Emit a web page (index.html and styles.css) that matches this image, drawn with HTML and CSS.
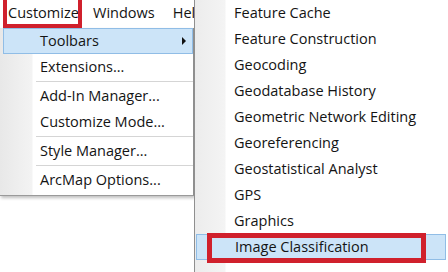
FILE: index.html
```html
<!DOCTYPE html>
<html>
<head>
<meta charset="utf-8">
<link rel="stylesheet" href="styles.css">
</head>
<body>
<div class="screen">
  <div class="left">
    <div class="menubar">
      <span class="mb-item mb-first annotated">Customize</span>
      <span class="mb-item mb-win">Windows</span>
      <span class="mb-item">Help</span>
    </div>
    <div class="dropdown">
      <div class="item hl">Toolbars<span class="arrow"></span></div>
      <div class="item">Extensions...</div>
      <div class="sep"></div>
      <div class="item">Add-In Manager...</div>
      <div class="item">Customize Mode...</div>
      <div class="sep"></div>
      <div class="item">Style Manager...</div>
      <div class="sep"></div>
      <div class="item">ArcMap Options...</div>
    </div>
  </div>
  <div class="sub">
    <div class="sitem">Feature Cache</div>
    <div class="sitem">Feature Construction</div>
    <div class="sitem">Geocoding</div>
    <div class="sitem">Geodatabase History</div>
    <div class="sitem">Geometric Network Editing</div>
    <div class="sitem">Georeferencing</div>
    <div class="sitem">Geostatistical Analyst</div>
    <div class="sitem">GPS</div>
    <div class="sitem">Graphics</div>
    <div class="sitem shl"><span class="sbox"></span>Image Classification</div>
  </div>
</div>
</body>
</html>
```

FILE: styles.css
```css
html, body {
  margin: 0;
  padding: 0;
  background: #ffffff;
}
.screen {
  width: 448px;
  height: 272px;
  overflow: hidden;
  display: flex;
  font-family: "Open Sans", "Noto Sans", sans-serif;
  font-size: 14.5px;
  color: #141414;
}
.left {
  width: 194px;
  flex: none;
  display: flex;
  flex-direction: column;
  overflow: hidden;
}
.menubar {
  height: 28px;
  display: flex;
  white-space: nowrap;
  line-height: 26px;
}
.mb-item {
  padding: 0 0 0 8px;
}
.mb-first {
  margin-left: 3px;
  padding: 0 5px;
  width: 69px;
}
.mb-win {
  padding: 0 10px 0 11px;
}
.annotated {
  position: relative;
}
.annotated::after {
  content: "";
  position: absolute;
  left: 0;
  top: -6px;
  width: 79px;
  height: 34px;
  box-sizing: border-box;
  border: 4px solid #d0202c;
}
.dropdown {
  background: linear-gradient(to right, #e8e8e8 0, #f3f3f3 32px, #ffffff 33px);
  border-right: 1px solid #8f8f8f;
  border-bottom: 1px solid #9a9a9a;
  box-shadow: 1px 2px 3px rgba(0,0,0,0.25);
  padding-bottom: 2px;
}
.item {
  height: 26px;
  line-height: 26px;
  padding-left: 40px;
  white-space: nowrap;
  position: relative;
}
.item.hl {
  margin: 0 0 0 3px;
  padding-left: 36px;
  line-height: 24px;
  box-sizing: border-box;
  background: #cce4f8;
  border: 1px solid #90bde6;
}
.arrow {
  position: absolute;
  right: 6px;
  top: 8px;
  width: 0;
  height: 0;
  border-top: 4px solid transparent;
  border-bottom: 4px solid transparent;
  border-left: 4px solid #111;
}
.sep {
  height: 1px;
  margin: 1px 0 1px 36px;
  background: #d5d5d5;
}
.sub {
  flex: 1;
  border-left: 1px solid #8f8f8f;
  background: linear-gradient(to right, #ececec 0, #f4f4f4 30px, #ffffff 31px);
}
.sitem {
  height: 26px;
  line-height: 26px;
  padding-left: 39px;
  white-space: nowrap;
  position: relative;
}
.sitem.shl {
  margin: 0 2px 0 1px;
  padding-left: 38px;
  box-sizing: border-box;
  line-height: 24px;
  background: #cce4f8;
  border: 1px solid #90bde6;
}
.sbox {
  position: absolute;
  left: 10px;
  top: -2px;
  width: 219px;
  height: 30px;
  box-sizing: border-box;
  border: 5px solid #d0202c;
}
```
